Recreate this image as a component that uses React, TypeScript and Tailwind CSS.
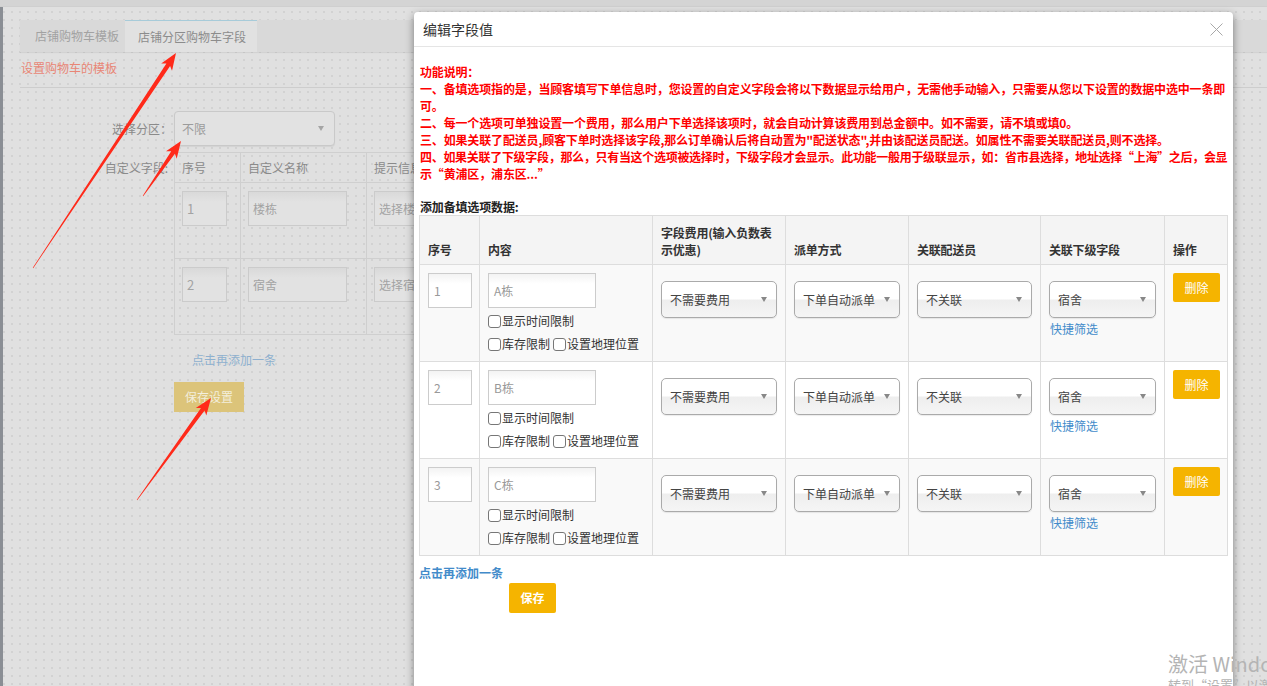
import React from "react";

type Pt = [number, number];

function arrowPoints(t: Pt, h: Pt): string {
  const dx = h[0] - t[0];
  const dy = h[1] - t[1];
  const L = Math.sqrt(dx * dx + dy * dy);
  const ux = dx / L;
  const uy = dy / L;
  const nx = -uy;
  const ny = ux;
  const headLen = 17;
  const headW = 6.5;
  const shaftW = 2.2;
  const tailW = 0.3;
  const bx = h[0] - ux * headLen;
  const by = h[1] - uy * headLen;
  const cx = h[0] - ux * (headLen - 3);
  const cy = h[1] - uy * (headLen - 3);
  const pts: Pt[] = [
    [t[0] + nx * tailW, t[1] + ny * tailW],
    [cx + nx * shaftW, cy + ny * shaftW],
    [bx + nx * headW, by + ny * headW],
    [h[0], h[1]],
    [bx - nx * headW, by - ny * headW],
    [cx - nx * shaftW, cy - ny * shaftW],
    [t[0] - nx * tailW, t[1] - ny * tailW],
  ];
  return pts.map((p) => `${p[0].toFixed(1)},${p[1].toFixed(1)}`).join(" ");
}

function Select({ label, className = "" }: { label: string; className?: string }) {
  return (
    <div
      className={`mt-[8px] h-[37px] rounded-[5px] border border-[#aaa] bg-[linear-gradient(#ffffff_0%,#ffffff_48%,#eeeeee_52%,#f5f5f5_100%)] shadow-[0_1px_1px_rgba(0,0,0,0.08)] flex items-center justify-between pl-[8px] pr-[9px] text-[12px] text-[#444] ${className}`}
    >
      <span>{label}</span>
      <span className="w-0 h-0 border-x-[3.5px] border-x-transparent border-t-[5px] border-t-[#888]" />
    </div>
  );
}

function Check({ label }: { label: string }) {
  return (
    <span className="inline-flex items-center">
      <span className="inline-block w-[13px] h-[13px] border border-[#777] rounded-[3px] bg-white mr-[1px]" />
      <span>{label}</span>
    </span>
  );
}

function Input({ value, w }: { value: string; w: string }) {
  return (
    <div
      className={`${w} h-[35px] border border-[#ccc] bg-[linear-gradient(#f3f3f3_0%,#ffffff_30%)] flex items-center pl-[5px] text-[12px] text-[#999]`}
    >
      {value}
    </div>
  );
}

const rows = [
  { n: "1", c: "A栋", bg: "bg-[#f9f9f9]" },
  { n: "2", c: "B栋", bg: "bg-white" },
  { n: "3", c: "C栋", bg: "bg-[#f9f9f9]" },
];

export default function App() {
  return (
    <div className="relative w-[1267px] h-[686px] overflow-hidden bg-[#e0e0e0] bg-[radial-gradient(circle,#d2d2d2_0.8px,transparent_1.1px)] bg-[length:8px_8px] font-['Noto_Sans_CJK_SC','Microsoft_YaHei',sans-serif] text-[12px]">
      {/* top strip */}
      <div className="h-[7px] bg-[#d4d4d4] border-b border-[#cfcfcf]" />
      <div className="flex h-[679px]">
        <div className="w-[3px] bg-[#8a8e94]" />
        {/* background page */}
        <div className="flex-1 pl-[17px]">
          <div className="mt-[13px] h-[32px] bg-[#d9d9d9] flex shadow-[0_1px_1px_rgba(0,0,0,0.06)]">
            <div className="w-[105px] flex items-center pl-[15px] text-[12px] text-[#a2a2a2]">
              店铺购物车模板
            </div>
            <div className="w-[132px] flex items-center pl-[13px] text-[12px] text-[#8c8c8c] bg-[#e1e1e1] border-t border-[#a7cbd9]">
              店铺分区购物车字段
            </div>
          </div>
          <div className="mt-[8px] leading-[16px] pl-[1px] text-[12px] text-[#e88676]">设置购物车的模板</div>
          <div className="mt-[11px] h-px bg-[#cdcdcd]" />

          <div className="mt-[23px] flex">
            <div className="w-[154px] pr-[2px] h-[35px] flex items-center justify-end text-[#8a8a8a]">选择分区：</div>
            <div className="w-[161px] h-[35px] rounded-[4px] border border-[#c9c9c9] bg-[#e2e2e2] shadow-[0_1px_1px_rgba(0,0,0,0.06)] flex items-center justify-between pl-[7px] pr-[10px] text-[#9b9b9b]">
              <span>不限</span>
              <span className="w-0 h-0 border-x-[3.5px] border-x-transparent border-t-[5px] border-t-[#a5a5a5]" />
            </div>
          </div>

          <div className="mt-[6px] flex">
            <div className="w-[154px] pr-[6px] h-[31px] flex items-center justify-end text-[#8a8a8a]">自定义字段:</div>
            <div>
              <div className="flex border border-[#cfcfcf] h-[31px] text-[#8a8a8a]">
                <div className="w-[66px] border-r border-[#cfcfcf] flex items-center pl-[7px]">序号</div>
                <div className="w-[126px] border-r border-[#cfcfcf] flex items-center pl-[7px]">自定义名称</div>
                <div className="w-[200px] flex items-center pl-[7px]">提示信息</div>
              </div>
              {[
                { n: "1", c: "楼栋", s: "选择楼栋" },
                { n: "2", c: "宿舍", s: "选择宿舍" },
              ].map((r) => (
                <div key={r.n} className="flex border border-t-0 border-[#cfcfcf] h-[76px]">
                  <div className="w-[66px] border-r border-[#cfcfcf] pl-[7px] pt-[8px]">
                    <div className="w-[45px] h-[35px] border border-[#cbcbcb] bg-[linear-gradient(#d9d9d9_0%,#e2e2e2_30%)] flex items-center pl-[4px] text-[13px] text-[#a3a3a3]">
                      {r.n}
                    </div>
                  </div>
                  <div className="w-[126px] border-r border-[#cfcfcf] pl-[7px] pt-[8px]">
                    <div className="w-[99px] h-[35px] border border-[#cbcbcb] bg-[linear-gradient(#d9d9d9_0%,#e2e2e2_30%)] flex items-center pl-[4px] text-[#a3a3a3]">
                      {r.c}
                    </div>
                  </div>
                  <div className="w-[200px] pl-[7px] pt-[8px]">
                    <div className="w-[120px] h-[35px] border border-[#cbcbcb] bg-[linear-gradient(#d9d9d9_0%,#e2e2e2_30%)] flex items-center pl-[4px] text-[#a3a3a3]">
                      {r.s}
                    </div>
                  </div>
                </div>
              ))}
              <div className="mt-[17px] pl-[18px] leading-[16px] text-[#8eb0cf]">点击再添加一条</div>
              <div className="mt-[14px] w-[70px] h-[30px] bg-[#dcc47a] flex items-center justify-center text-[#f3eedc]">
                保存设置
              </div>
            </div>
          </div>
        </div>
      </div>

      {/* annotation arrows */}
      <svg className="absolute left-0 top-0 pointer-events-none" width="420" height="520">
        <polygon points={arrowPoints([33, 268], [176, 53])} fill="#ff2a1a" />
        <polygon points={arrowPoints([143, 196], [181, 141])} fill="#ff2a1a" />
        <polygon points={arrowPoints([137, 500], [211, 398])} fill="#ff2a1a" />
      </svg>

      {/* modal */}
      <div className="absolute left-[414px] top-[12px] w-[819px] h-[690px] bg-white rounded-t-[4px] shadow-[0_3px_9px_rgba(0,0,0,0.45)]">
        <div className="h-[35px] border-b border-[#e5e5e5] flex items-center justify-between pl-[9px] pr-[10px]">
          <span className="text-[14px] text-[#333]">编辑字段值</span>
          <svg width="13" height="13" viewBox="0 0 13 13">
            <path d="M0.5 0.5 L12.5 12.5 M12.5 0.5 L0.5 12.5" stroke="#a8a8a8" strokeWidth="1" fill="none" />
          </svg>
        </div>
        <div className="pl-[5px] pr-[6px] pt-[16px]">
          <div className="pl-[1px] font-bold text-[12px] leading-[17px] tracking-[-0.16px] text-[#ff0000] whitespace-nowrap">
            <div>功能说明：</div>
            <div>一、备填选项指的是，当顾客填写下单信息时，您设置的自定义字段会将以下数据显示给用户，无需他手动输入，只需要从您以下设置的数据中选中一条即</div>
            <div>可。</div>
            <div>二、每一个选项可单独设置一个费用，那么用户下单选择该项时，就会自动计算该费用到总金额中。如不需要，请不填或填0。</div>
            <div>三、如果关联了配送员,顾客下单时选择该字段,那么订单确认后将自动置为"配送状态",并由该配送员配送。如属性不需要关联配送员,则不选择。</div>
            <div className="tracking-[-0.3px]">四、如果关联了下级字段，那么，只有当这个选项被选择时，下级字段才会显示。此功能一般用于级联显示，如：省市县选择，地址选择“上海”之后，会显</div>
            <div>示“黄浦区，浦东区...”</div>
            <div>&nbsp;</div>
            <div className="text-[#222] leading-[16px]">添加备填选项数据:</div>
          </div>

          <table className="table-fixed border-collapse w-[808px] text-[12px] text-[#333]">
            <colgroup>
              <col className="w-[60px]" />
              <col className="w-[173px]" />
              <col className="w-[133px]" />
              <col className="w-[123px]" />
              <col className="w-[132px]" />
              <col className="w-[124px]" />
              <col className="w-[63px]" />
            </colgroup>
            <thead>
              <tr className="bg-[#f4f4f4]">
                {["序号", "内容", "字段费用(输入负数表示优惠)", "派单方式", "关联配送员", "关联下级字段", "操作"].map((h) => (
                  <th
                    key={h}
                    className="border border-[#dddddd] px-[8px] pt-[8px] pb-[6px] align-bottom text-left font-bold leading-[17px] tracking-[-0.2px]"
                  >
                    {h}
                  </th>
                ))}
              </tr>
            </thead>
            <tbody>
              {rows.map((r) => (
                <tr key={r.n} className={r.bg}>
                  <td className="border border-[#dddddd] p-[8px] align-top">
                    <Input value={r.n} w="w-[44px]" />
                  </td>
                  <td className="border border-[#dddddd] p-[8px] align-top">
                    <Input value={r.c} w="w-[108px]" />
                    <div className="mt-[4px] h-[18px] flex items-center">
                      <Check label="显示时间限制" />
                    </div>
                    <div className="mt-[5px] h-[18px] flex items-center gap-[3px]">
                      <Check label="库存限制" />
                      <Check label="设置地理位置" />
                    </div>
                  </td>
                  <td className="border border-[#dddddd] p-[8px] align-top">
                    <Select label="不需要费用" />
                  </td>
                  <td className="border border-[#dddddd] p-[8px] align-top">
                    <Select label="下单自动派单" />
                  </td>
                  <td className="border border-[#dddddd] p-[8px] align-top">
                    <Select label="不关联" />
                  </td>
                  <td className="border border-[#dddddd] p-[8px] align-top">
                    <Select label="宿舍" />
                    <div className="mt-[2px] pl-[1px] leading-[17px] text-[#428bca]">快捷筛选</div>
                  </td>
                  <td className="border border-[#dddddd] p-[8px] align-top">
                    <div className="w-[47px] h-[29px] rounded-[2px] bg-[#f5b400] flex items-center justify-center text-white">
                      删除
                    </div>
                  </td>
                </tr>
              ))}
            </tbody>
          </table>

          <div className="mt-[8px] leading-[17px] font-bold text-[#428bca]">点击再添加一条</div>
          <div className="mt-[2px] ml-[90px] w-[47px] h-[30px] rounded-[2px] bg-[#f5b400] flex items-center justify-center text-white font-bold">
            保存
          </div>
        </div>
      </div>

      {/* windows watermark */}
      <div className="absolute left-[1168px] top-[651px] text-[#b4b4b4] whitespace-nowrap pointer-events-none">
        <div className="text-[20px] leading-[26px]">激活 Windows</div>
        <div className="text-[13px] leading-[16px]">转到“设置”以激活 Windows。</div>
      </div>
    </div>
  );
}
